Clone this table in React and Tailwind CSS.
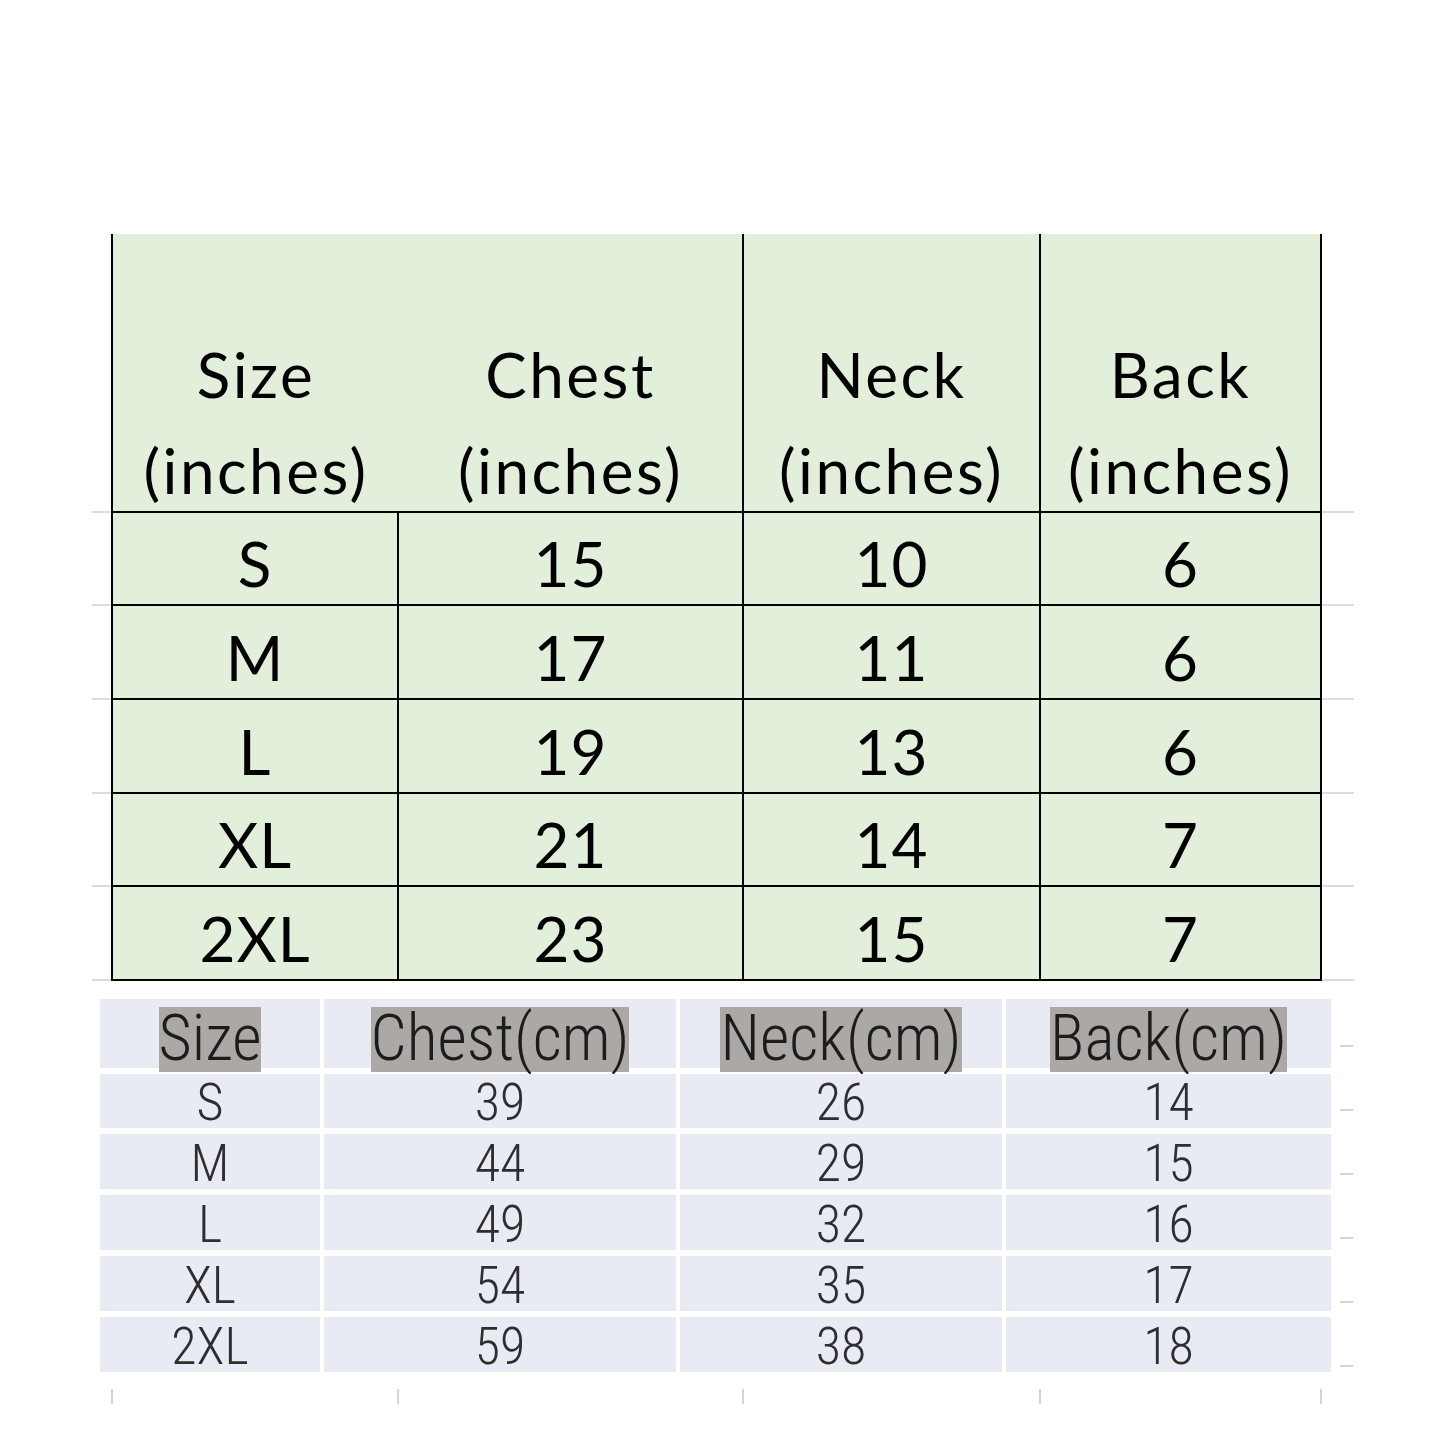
const inchRows = [
  ['S', '15', '10', '6'],
  ['M', '17', '11', '6'],
  ['L', '19', '13', '6'],
  ['XL', '21', '14', '7'],
  ['2XL', '23', '15', '7'],
];

const cmHeaders = ['Size', 'Chest(cm)', 'Neck(cm)', 'Back(cm)'];

const cmRows = [
  ['S', '39', '26', '14'],
  ['M', '44', '29', '15'],
  ['L', '49', '32', '16'],
  ['XL', '54', '35', '17'],
  ['2XL', '59', '38', '18'],
];

const inchHeaders = ['Size', 'Chest', 'Neck', 'Back'];

const calibri = { fontFamily: 'Lato, "Open Sans", sans-serif' };
const narrow = { fontFamily: '"Roboto Condensed", "Liberation Sans Narrow", "DejaVu Sans Condensed", "Liberation Sans", sans-serif' };

// row heights of the green table, header first
const rowHeights = 'grid-rows-[279px_93px_94px_94px_93px_94px]';

function Stubs({ width }) {
  return (
    <div className={`grid ${rowHeights} ${width}`}>
      {Array.from({ length: 6 }, (_, i) => (
        <div key={i} className="border-b-2 border-[#dcdcdc]" />
      ))}
    </div>
  );
}

function InchTable() {
  return (
    <div className="flex ml-[92px]" style={calibri}>
      <Stubs width="w-[19px]" />
      <div className={`grid grid-cols-[286px_345px_297px_281px] ${rowHeights} bg-[#e2efda] border-l-2 border-black text-black`}>
        {inchHeaders.map((h, i) => (
          <div
            key={h}
            className={`flex flex-col justify-end items-center border-b-2 border-black ${i === 0 ? '' : 'border-r-2'}`}
          >
            <div className="-mb-[7px] flex flex-col items-center text-[62px] leading-[96px] tracking-[2.5px]">
              <span>{h}</span>
              <span>(inches)</span>
            </div>
          </div>
        ))}
        {inchRows.map((row) =>
          row.map((cell, j) => (
            <div
              key={row[0] + j}
              className="flex items-center justify-center pt-[9px] border-r-2 border-b-2 border-black text-[62px] leading-none tracking-[1px]"
            >
              {cell}
            </div>
          ))
        )}
      </div>
      <Stubs width="w-[32px]" />
    </div>
  );
}

function CmTable() {
  return (
    <div className="flex ml-[100px] mt-[18px]" style={narrow}>
      <div className="grid grid-cols-[220px_352px_322px_325px] grid-rows-[69px_54px_55px_55px_55px_55px] gap-x-[4px] gap-y-[6px]">
        {cmHeaders.map((h) => (
          <div key={h} className="flex justify-center items-start pt-[8px] bg-[#e8eaf4]">
            <span className="inline-block h-[65px] leading-[64px] bg-[#aba8a6] text-[64px] font-light text-[#1c1c1c]">{h}</span>
          </div>
        ))}
        {cmRows.map((row) =>
          row.map((cell, j) => (
            <div
              key={row[0] + j}
              className="flex items-center justify-center pt-[4px] bg-[#e8eaf4] text-[52px] leading-none font-light text-[#2e2e2e]"
            >
              {cell}
            </div>
          ))
        )}
      </div>
      <div className="ml-[9px] flex flex-col pt-[46px] gap-[62px]">
        {Array.from({ length: 6 }, (_, i) => (
          <div key={i} className="w-[13px] h-[2px] bg-[#d4d4d4]" />
        ))}
      </div>
    </div>
  );
}

function BottomTicks() {
  return (
    <div className="grid grid-cols-[286px_345px_297px_281px_2px] ml-[111px] mt-[17px] h-[15px]">
      {Array.from({ length: 5 }, (_, i) => (
        <div key={i} className="border-l-2 border-[#d4d4d4]" />
      ))}
    </div>
  );
}

export default function App() {
  return (
    <div className="w-[1445px] h-[1445px] bg-white pt-[234px] overflow-hidden">
      <InchTable />
      <CmTable />
      <BottomTicks />
    </div>
  );
}
